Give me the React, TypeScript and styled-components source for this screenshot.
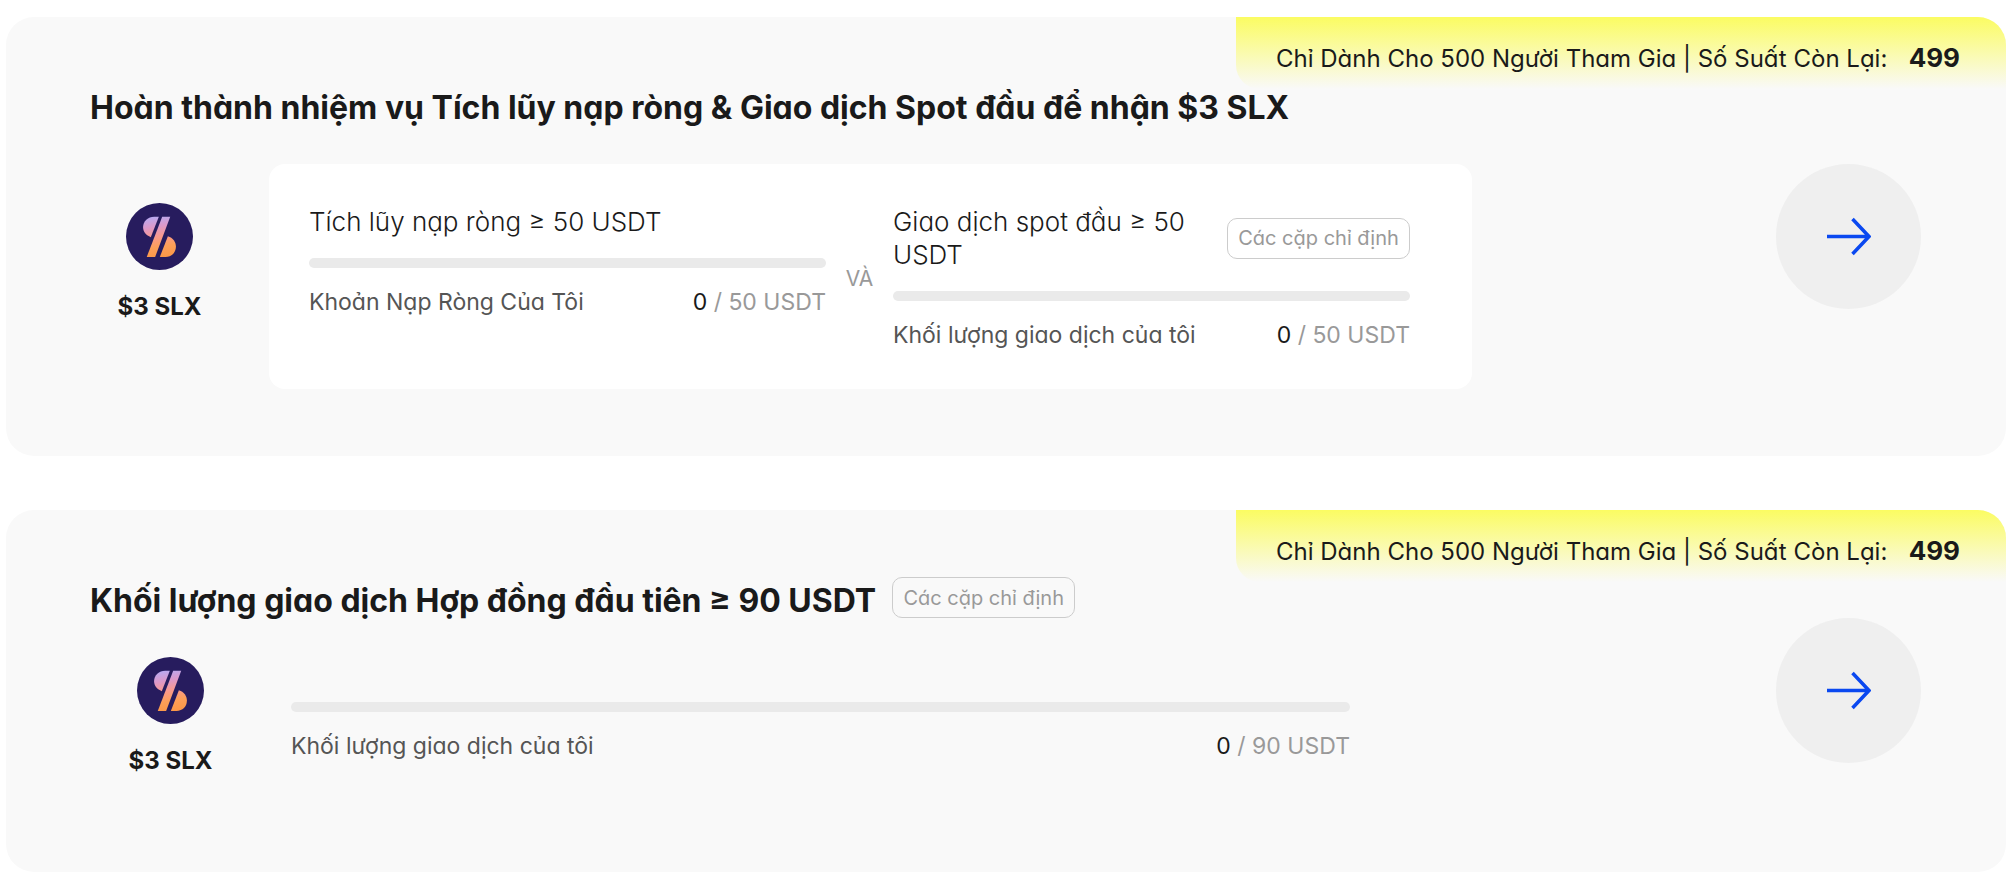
import React, { useId } from 'react';
import styled, { createGlobalStyle } from 'styled-components';

const GlobalStyle = createGlobalStyle`
  *, *::before, *::after { box-sizing: border-box; }
  body {
    margin: 0;
    background: #fff;
    color: #1a1a1a;
    font-family: Inter, 'Open Sans', sans-serif;
    font-feature-settings: 'cv11';
  }
  button { font-family: inherit; font-feature-settings: inherit; cursor: pointer; }
`;

const Page = styled.main`
  display: flex;
  flex-direction: column;
  gap: 54px;
  padding: 17px 8px 2px 6px;
`;

const Card = styled.section<{ $bottom: number }>`
  position: relative;
  padding: 60px 85px ${(p) => p.$bottom}px 84px;
  border-radius: 28px;
  background: #f9f9f9;
  overflow: hidden;
`;

const Banner = styled.p`
  position: absolute;
  top: 0;
  right: 0;
  width: 770px;
  height: 72px;
  margin: 0;
  padding: 0 46px 0 40px;
  display: flex;
  justify-content: space-between;
  align-items: baseline;
  border-bottom-left-radius: 24px;
  background: linear-gradient(#fbfc62, #f9f9f9);
  font-size: 24px;
  line-height: 82px;
  white-space: nowrap;
`;

const Remaining = styled.strong`
  font-size: 26px;
  font-weight: 700;
`;

const CardHeader = styled.header`
  display: flex;
  align-items: flex-start;
  gap: 16px;
  height: 60px;
  padding-top: 7px;
`;

const CardTitle = styled.h2`
  margin: 0;
  font-size: 32px;
  line-height: 48px;
  font-weight: 700;
  white-space: nowrap;
`;

const PairsTag = styled.button`
  flex: none;
  width: 183px;
  height: 41px;
  padding: 0;
  border: 1px solid #ccc;
  border-radius: 10px;
  background: transparent;
  color: #999;
  font-size: 20px;
  line-height: 24px;
  white-space: nowrap;
`;

const CardBody = styled.div<{ $reward: number; $content: number; $spare: number; $top: number }>`
  display: grid;
  grid-template-columns:
    ${(p) => p.$reward}px minmax(0, ${(p) => p.$content}fr) minmax(0, ${(p) => p.$spare}fr) 145px;
  column-gap: 40px;
  margin-top: ${(p) => p.$top}px;
`;

const Reward = styled.div`
  display: flex;
  flex-direction: column;
  align-items: center;
  gap: 20px;
  padding-top: 39px;
  font-size: 24px;
  line-height: 34px;
  font-weight: 700;
  white-space: nowrap;
`;

const Panel = styled.div`
  display: grid;
  grid-template-columns: minmax(0, 1fr) 67px minmax(0, 1fr);
  min-height: 225px;
  padding: 41px 62px 37px 40px;
  border-radius: 16px;
  background: #fff;
`;

const Joiner = styled.span`
  align-self: center;
  text-align: center;
  font-size: 21px;
  line-height: 28px;
  color: #999;
`;

const TaskHead = styled.div`
  display: flex;
  align-items: center;
  justify-content: space-between;
  gap: 20px;
  margin-bottom: 20px;
`;

const TaskTitle = styled.h3`
  margin: 0;
  font-size: 26px;
  line-height: 33px;
  font-weight: 300;
`;

const SoloTask = styled.div`
  padding-top: 84px;
`;

const Meter = styled.progress`
  display: block;
  width: 100%;
  height: 10px;
  border: 0;
  border-radius: 5px;
  overflow: hidden;
  appearance: none;
  background: #eaeaea;
  &::-webkit-progress-bar { background: #eaeaea; }
  &::-webkit-progress-value { background: #0a48f0; }
`;

const MeterFooter = styled.div`
  display: flex;
  justify-content: space-between;
  margin-top: 20px;
  font-size: 23px;
  line-height: 28px;
  color: #555;
  white-space: nowrap;
`;

const Amount = styled.span`
  color: #999;
`;

const Current = styled.span`
  color: #1a1a1a;
`;

const GoButton = styled.button`
  display: flex;
  align-items: center;
  justify-content: center;
  width: 145px;
  height: 145px;
  padding: 0;
  grid-column: 4;
  border: 0;
  border-radius: 50%;
  background: #efefef;
`;

function Coin() {
  const id = useId();
  return (
    <svg width="67" height="67" viewBox="0 0 200 200" aria-hidden="true">
      <defs>
        <linearGradient id={id} gradientUnits="userSpaceOnUse" x1="90" y1="40" x2="110" y2="160">
          <stop offset="0" stopColor="#b9a9f0" />
          <stop offset="0.25" stopColor="#dd98c8" />
          <stop offset="0.5" stopColor="#fa9a8c" />
          <stop offset="0.75" stopColor="#fd9f58" />
          <stop offset="1" stopColor="#fb9848" />
        </linearGradient>
      </defs>
      <circle cx="100" cy="100" r="100" fill="#271c5e" />
      <g fill={`url(#${id})`}>
        <path d="M98 41H84C66 41 51 54 51 72C51 87 60 97 74 102Z" />
        <path d="M108 41H132L87 161H62Z" />
        <path d="M125 99C140 103 149 116 149 130C149 148 136 161 118 161H101Z" />
      </g>
    </svg>
  );
}

function Arrow() {
  return (
    <svg width="44" height="40" viewBox="0 0 44 40" fill="none" stroke="#0a48f0" strokeWidth="3.5" aria-hidden="true">
      <path d="M0 19.500H42M25.500 2L42 19.500L25.500 37" />
    </svg>
  );
}

function SlotBanner() {
  return (
    <Banner>
      <span>Chỉ Dành Cho 500 Người Tham Gia | Số Suất Còn Lại:</span>
      <Remaining>499</Remaining>
    </Banner>
  );
}

function RewardBadge() {
  return (
    <Reward>
      <Coin />
      <span>$3 SLX</span>
    </Reward>
  );
}

function TaskProgress({ label, target }: { label: string; target: number }) {
  return (
    <>
      <Meter value={0} max={target} aria-label={label} />
      <MeterFooter>
        <span>{label}</span>
        <Amount>
          <Current>0</Current> / {target} USDT
        </Amount>
      </MeterFooter>
    </>
  );
}

export default function App() {
  return (
    <>
      <GlobalStyle />
      <Page>
        <Card $bottom={67}>
          <SlotBanner />
          <CardHeader>
            <CardTitle>Hoàn thành nhiệm vụ Tích lũy nạp ròng &amp; Giao dịch Spot đầu để nhận $3 SLX</CardTitle>
          </CardHeader>
          <CardBody $reward={139} $content={1203} $spare={224} $top={27}>
            <RewardBadge />
            <Panel>
              <div>
                <TaskHead>
                  <TaskTitle>Tích lũy nạp ròng ≥ 50 USDT</TaskTitle>
                </TaskHead>
                <TaskProgress label="Khoản Nạp Ròng Của Tôi" target={50} />
              </div>
              <Joiner>VÀ</Joiner>
              <div>
                <TaskHead>
                  <TaskTitle>Giao dịch spot đầu ≥ 50 USDT</TaskTitle>
                  <PairsTag type="button">Các cặp chỉ định</PairsTag>
                </TaskHead>
                <TaskProgress label="Khối lượng giao dịch của tôi" target={50} />
              </div>
            </Panel>
            <GoButton type="button" aria-label="Tham gia">
              <Arrow />
            </GoButton>
          </CardBody>
        </Card>

        <Card $bottom={94}>
          <SlotBanner />
          <CardHeader>
            <CardTitle>Khối lượng giao dịch Hợp đồng đầu tiên ≥ 90 USDT</CardTitle>
            <PairsTag type="button">Các cặp chỉ định</PairsTag>
          </CardHeader>
          <CardBody $reward={161} $content={1059} $spare={346} $top={-12}>
            <RewardBadge />
            <SoloTask>
              <TaskProgress label="Khối lượng giao dịch của tôi" target={90} />
            </SoloTask>
            <GoButton type="button" aria-label="Tham gia">
              <Arrow />
            </GoButton>
          </CardBody>
        </Card>
      </Page>
    </>
  );
}
